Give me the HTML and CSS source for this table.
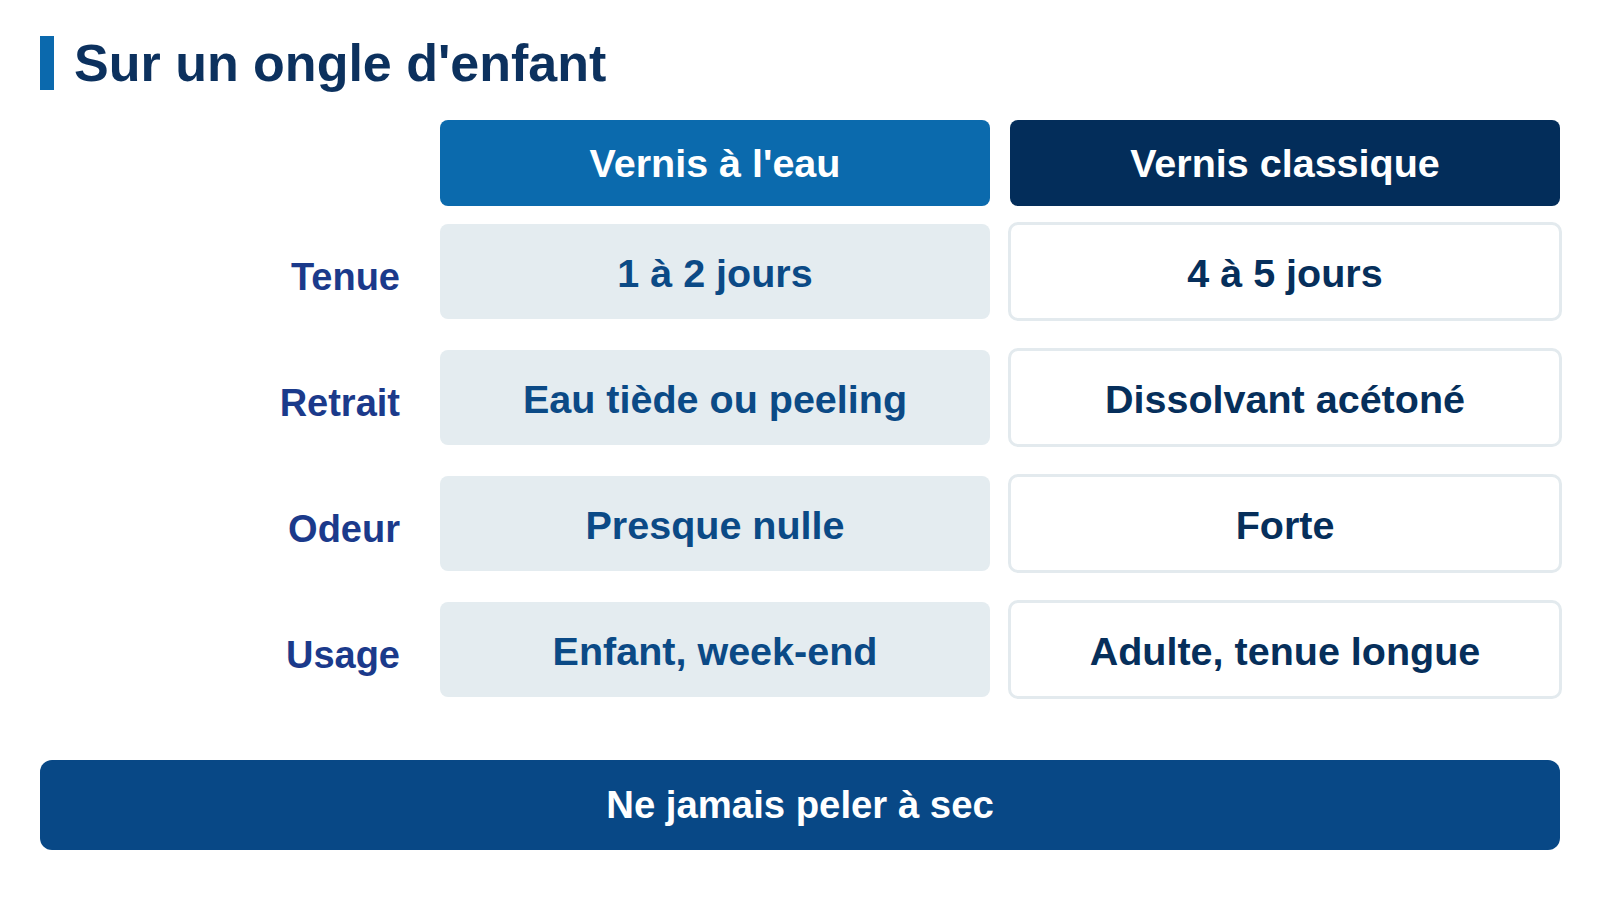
FILE: index.html
```html
<!DOCTYPE html>
<html lang="fr">
<head>
<meta charset="utf-8">
<title>Sur un ongle d'enfant</title>
<link rel="stylesheet" href="styles.css">
</head>
<body>
<main class="page">
  <header class="title-row">
    <span class="title-bar"></span>
    <h1 class="title">Sur un ongle d'enfant</h1>
  </header>

  <section class="table">
    <div class="grid head">
      <div class="spacer"></div>
      <div class="col-head col-head--water">Vernis à l'eau</div>
      <div class="col-head col-head--classic">Vernis classique</div>
    </div>
    <div class="grid rows">
      <div class="label">Tenue</div>
      <div class="cell cell--water">1 à 2 jours</div>
      <div class="cell cell--classic">4 à 5 jours</div>

      <div class="label">Retrait</div>
      <div class="cell cell--water">Eau tiède ou peeling</div>
      <div class="cell cell--classic">Dissolvant acétoné</div>

      <div class="label">Odeur</div>
      <div class="cell cell--water">Presque nulle</div>
      <div class="cell cell--classic">Forte</div>

      <div class="label">Usage</div>
      <div class="cell cell--water">Enfant, week-end</div>
      <div class="cell cell--classic">Adulte, tenue longue</div>
    </div>
  </section>

  <footer class="banner">Ne jamais peler à sec</footer>
</main>
</body>
</html>
```

FILE: styles.css
```css
* {
  box-sizing: border-box;
}

html, body {
  margin: 0;
  padding: 0;
  background: #ffffff;
}

body {
  font-family: "Liberation Sans", Arial, sans-serif;
  font-weight: 700;
  width: 1600px;
  height: 900px;
  overflow: hidden;
}

.page {
  padding: 36px 40px 0 40px;
  display: flex;
  flex-direction: column;
}

.title-row {
  display: flex;
  align-items: center;
  gap: 20px;
  height: 54px;
}

.title-bar {
  width: 14px;
  height: 54px;
  background: #0b69ad;
  flex: none;
}

.title {
  margin: 0;
  font-size: 52px;
  line-height: 54px;
  font-weight: 700;
  color: #0c315e;
}

.table {
  margin-top: 30px;
  display: flex;
  flex-direction: column;
  gap: 18px;
}

.grid {
  display: grid;
  grid-template-columns: 380px 1fr 1fr;
  column-gap: 20px;
}

.rows {
  row-gap: 31px;
  grid-auto-rows: 95px;
}

.col-head {
  height: 86px;
  border-radius: 8px;
  display: flex;
  align-items: center;
  justify-content: center;
  color: #ffffff;
  font-size: 39.5px;
}

.col-head--water {
  background: #0b6aad;
}

.col-head--classic {
  background: #032d5a;
}

.label {
  display: flex;
  align-items: center;
  justify-content: flex-end;
  padding-right: 20px;
  padding-top: 12px;
  font-size: 38px;
  color: #1b3a8b;
}

.cell {
  border-radius: 8px;
  display: flex;
  align-items: center;
  justify-content: center;
  padding-top: 4px;
  font-size: 39.5px;
}

.cell--water {
  background: #e4ecf0;
  color: #0b4a86;
}

.cell--classic {
  background: #ffffff;
  color: #062f5b;
  outline: 3px solid #e3eaee;
  outline-offset: -1px;
}

.banner {
  margin-top: 63px;
  height: 90px;
  border-radius: 12px;
  background: #084886;
  color: #ffffff;
  font-size: 38.3px;
  display: flex;
  align-items: center;
  justify-content: center;
}
```
